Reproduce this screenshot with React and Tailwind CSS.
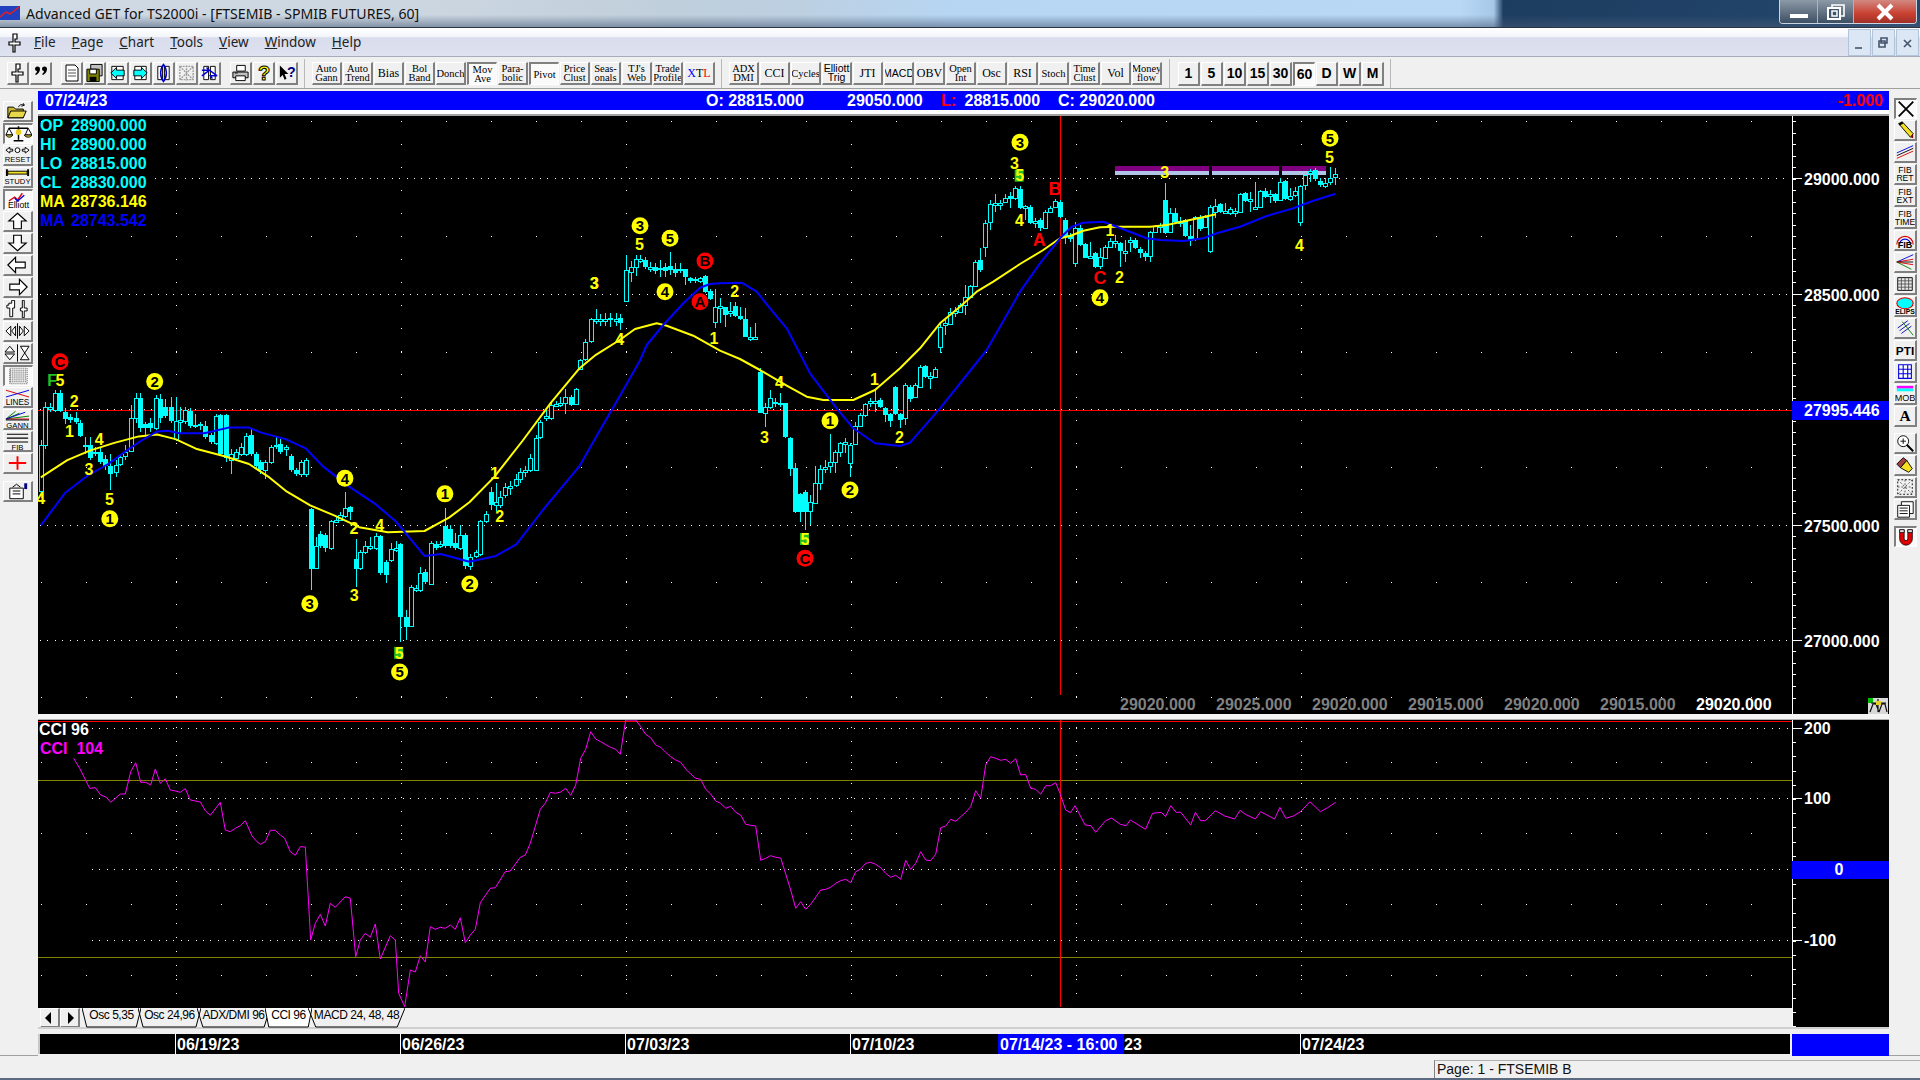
import React from "react";

const A = (x, y) => [x / 2.45, 100 + y / 2.61];
const B = (x, y) => [560 + x / 3, 120 + y / 3];
const C = (x, y) => [1000 + x / 3, 110 + y / 3];
const Z10 = (x, y) => [1000 + x / 1.704, 660 + y / 3];
const Z11 = (x, y) => [38 + x / 3, 720 + y / 3];
const Z12 = (x, y) => [540 + x / 3, 720 + y / 3];

const cA = [
  [100,900,1020,0,1040,0],[110,800,900,0,0,0],[122,800,803,790,815,0],[135,765,810,758,815,0],[148,765,812,758,815,1],[160,815,833,0,0,1],[172,828,835,820,842,1],[185,830,840,815,845,1],[197,842,878,835,880,1],
  [209,900,905,880,925,1],[220,900,935,880,940,1],[232,918,922,905,930,1],[245,918,945,905,950,1],[258,938,955,0,0,1],[270,955,975,925,1018,1],[283,952,972,0,0,0],[295,932,950,925,955,0],[307,920,930,900,940,0],[320,830,915,795,920,0],[332,778,830,0,0,0],[344,778,855,0,0,1],[356,845,855,840,875,1],[368,842,855,0,0,1],[381,778,855,770,860,0],[393,780,830,0,0,1],[405,800,825,780,830,1],[418,800,838,775,842,1],[430,838,885,775,890,0],[442,835,840,800,870,0],[454,810,838,800,845,0],[466,812,852,805,855,1],[478,848,851,820,856,1],[490,846,850,840,860,1],[503,850,880,0,885,1],[516,875,893,870,897,1],[528,825,895,820,900,0],[540,822,925,820,930,1],[553,822,935,820,945,1],[565,925,940,910,975,0],[577,918,935,910,940,0],[590,905,925,895,930,0],[602,878,925,870,930,0],[614,875,925,855,930,1],[626,925,955,920,960,1],[638,945,965,940,975,1],[650,945,965,940,990,0],[663,905,945,900,950,0],[675,900,905,880,912,1],[687,898,918,885,925,1],[700,906,910,900,930,0],[712,930,965,925,970,1],[725,965,975,960,982,1],[737,945,975,940,985,0],[750,940,975,935,985,0],
  [761,1068,1225,1065,1280,1],[773,1165,1222,1140,1225,0],[785,1133,1165,1125,1170,1],[797,1135,1170,1130,1180,1],[810,1100,1170,1095,1175,0],[822,1095,1100,1085,1105,0],[834,1082,1095,1075,1100,0],[846,1065,1085,1022,1092,0],[858,1062,1075,1060,1095,1],
  [871,1197,1225,1145,1270,1],[883,1180,1222,1175,1228,0],[895,1165,1180,1150,1185,0],[907,1165,1170,1140,1175,0],[920,1138,1170,1130,1175,0],[932,1138,1235,1135,1240,1],[945,1205,1240,1200,1260,1],[957,1172,1200,1155,1205,0],[969,1170,1174,1150,1180,0],[981,1160,1350,1155,1415,1],[994,1350,1375,1330,1410,1],[1006,1270,1372,1265,1375,0],[1018,1273,1278,1265,1285,0],[1030,1235,1280,1218,1285,0],[1042,1232,1258,1225,1262,1],[1055,1155,1262,1150,1265,0],[1067,1160,1168,1150,1175,1],[1079,1158,1164,1150,1170,0],[1091,1112,1165,1065,1170,1],[1103,1120,1165,1110,1170,1],[1115,1155,1170,1130,1175,1],[1128,1135,1170,1110,1175,0],[1140,1135,1215,1130,1225,1],[1152,1192,1215,1185,1228,0],[1165,1180,1190,1175,1195,0],[1177,1100,1185,1095,1190,0],[1190,1080,1100,1072,1105,0],
  [1202,1022,1058,1010,1070,1],[1214,1050,1056,1000,1075,0],[1226,1035,1058,1020,1065,0],[1238,1010,1032,1000,1040,0],[1250,1008,1013,995,1030,0],[1263,988,1005,975,1010,0],[1275,970,990,960,1000,0],[1287,965,970,955,985,0],[1299,935,965,925,970,0],[1312,882,965,875,968,0],[1324,840,880,835,885,0],[1337,825,830,810,838,0],[1349,795,830,790,835,0],[1361,793,797,785,800,0],[1373,792,797,775,800,0],[1385,775,790,755,820,0],[1398,775,795,770,798,1],[1410,755,793,752,797,0],
  [1422,678,702,675,705,0],[1434,632,675,625,680,0],[1447,572,630,568,635,0],[1459,572,576,545,585,0],[1471,572,576,558,590,0],[1483,572,576,555,590,0],[1495,568,574,555,592,1],[1508,572,577,555,590,0],[1520,570,582,558,600,1],[1533,445,525,405,528,0],[1545,435,450,420,475,0],[1557,415,435,405,460,0],
];
const cB = [
  [240,416,420,405,430,0],[255,420,442,412,448,1],[270,440,443,425,455,0],[285,440,452,430,462,1],[300,443,450,420,470,1],[315,440,452,430,472,1],[330,437,450,397,465,1],[345,448,458,430,470,1],[360,448,452,430,460,1],[375,448,470,448,495,1],[390,475,483,470,490,1],[405,478,482,470,490,1],[420,475,482,470,488,0],[435,468,515,465,518,1],[450,513,537,508,540,1],
  [465,560,607,508,625,0],[480,558,562,535,610,0],[495,562,584,560,622,1],[510,573,577,545,590,0],[525,558,587,545,590,1],[540,588,597,560,600,1],[555,598,650,565,652,1],[570,650,655,620,662,0],[585,650,655,610,658,0],
  [600,755,878,745,880,1],[615,860,880,850,922,0],[630,835,862,810,868,0],[645,846,850,835,860,1],[660,848,852,818,860,1],[675,850,952,848,955,1],[690,955,1048,952,1068,1],[705,1045,1175,1030,1178,1],[720,1122,1175,1118,1205,1],[735,1115,1175,1110,1230,1],[750,1145,1172,1125,1215,0],[765,1088,1148,1038,1150,0],[780,1048,1090,1035,1110,0],[795,1040,1045,1020,1060,0],[810,1025,1038,942,1060,0],[825,997,1025,990,1060,0],[840,970,995,965,1010,0],[855,965,972,955,1000,0],[870,975,1030,970,1072,0],[885,918,972,905,976,0],[900,885,917,880,920,0],[915,852,885,848,890,0],[930,843,850,835,860,0],[945,842,846,810,875,0],[960,840,862,835,865,1],[975,865,885,862,905,1],[990,882,903,880,920,1],[1005,802,882,798,885,1],[1020,882,900,880,925,1],[1035,795,895,790,915,0],[1050,800,836,795,845,1],[1065,795,832,790,835,0],[1080,740,800,735,805,0],[1095,738,772,735,775,1],[1110,768,772,755,808,0],[1125,747,770,742,775,0],
  [1140,620,680,610,700,0],[1155,610,614,600,645,0],[1170,575,612,565,615,0],[1185,573,577,560,590,0],[1200,555,575,550,580,0],[1215,530,555,495,585,0],[1230,498,530,495,535,0],[1245,425,497,420,500,0],[1260,420,450,385,455,1],[1275,310,380,300,412,0],[1290,253,305,240,330,0],[1305,248,252,222,275,0],[1320,248,252,240,270,0],[1335,233,245,222,250,0],[1350,228,236,215,265,1],[1365,205,235,198,240,0],[1380,207,265,198,268,1],[1395,258,263,255,300,0],[1410,260,308,255,312,1],[1425,303,307,295,325,0],[1440,300,325,295,332,1],[1455,275,325,270,328,0],[1470,265,275,258,280,0],[1485,242,262,238,265,0],[1500,245,292,240,295,1],
];
const cC = [
  [195,330,380,325,402,1],[210,375,388,370,395,1],[225,355,458,335,470,0],[240,353,405,345,408,1],[255,403,443,400,445,1],[270,438,442,395,445,0],[285,430,470,425,473,1],[300,442,467,415,478,0],[315,410,445,405,448,0],[330,392,412,385,415,0],[345,393,397,375,415,0],[360,400,422,395,472,1],[375,423,428,390,455,0],[390,390,395,380,425,0],[405,390,413,385,418,1],[420,418,428,410,445,1],[435,428,442,422,452,1],[450,367,437,362,455,0],[465,348,365,345,368,0],[480,345,349,338,370,0],[495,270,368,220,372,1],[510,308,365,295,368,0],[525,310,335,295,338,1],[540,333,337,322,350,0],[555,330,378,328,382,1],[570,378,392,345,408,1],[585,320,388,318,392,0],[600,320,358,315,362,1],[615,320,350,316,355,0],[630,290,422,285,428,0],[645,287,305,268,325,0],[660,283,305,278,310,1],[675,303,307,280,312,0],[690,298,310,292,315,0],[705,302,306,295,320,0],[720,252,307,248,310,0],[735,250,272,245,275,1],[750,268,272,245,305,0],[765,290,295,215,300,0],[780,244,292,240,295,0],[795,242,260,235,265,1],[810,253,257,240,278,0],[825,253,273,250,278,1],[840,215,270,205,272,0],[855,213,267,210,270,1],[870,258,266,235,272,0],[885,243,255,232,262,0],[900,229,335,225,348,0],[915,196,226,190,240,0],[930,184,188,178,215,0],[945,180,208,175,212,1],[960,213,224,205,230,1],[975,218,228,205,235,0],[990,203,215,172,225,0],[1005,193,200,175,225,0],
];

function allCandles() {
  const out = [];
  const add = (list, map) => list.forEach((c) => {
    const [x, t] = map(c[0], c[1]);
    const [, b] = map(c[0], c[2]);
    const [, h] = map(c[0], c[3] || c[1] - 12);
    const [, l] = map(c[0], c[4] || c[2] + 12);
    out.push({ x: Math.round(x) + 0.5, t: Math.round(t), b: Math.round(b), h: Math.round(h), l: Math.round(l), f: c[5] });
  });
  add(cA, A); add(cB, B); add(cC, C);
  return out;
}

const pts = (list, map) => list.map(([x, y]) => map(x, y));
const toStr = (arr) => arr.map(([x, y]) => `${x.toFixed(1)},${y.toFixed(1)}`).join(" ");

const yellowLine = toStr([
  ...pts([[100,985],[165,940],[220,915],[280,895],[340,878],[385,873],[430,885],[480,910],[550,930],[610,950],[660,985],[700,1020],[760,1058],[820,1085],[880,1115],[950,1128],[1040,1125],[1100,1090],[1150,1050],[1210,985],[1280,890],[1350,790],[1420,700],[1460,665],[1520,625]], A),
  ...pts([[225,627],[290,610],[320,617],[400,647],[480,692],[540,717],[600,750],[680,797],[740,830],[790,840],[880,840],[945,810],[1020,745],[1080,685],[1140,610],[1200,560],[1250,515],[1300,485],[1380,432],[1450,390],[1500,355]], B),
  ...pts([[210,378],[250,362],[300,352],[350,350],[450,350],[500,345],[570,330],[648,313]], C),
]);
const blueLine = toStr([
  ...pts([[100,1110],[160,1025],[215,980],[265,950],[310,915],[345,890],[385,865],[410,863],[440,870],[500,870],[560,855],[610,855],[640,868],[700,885],[750,910],[790,955],[850,1005],[920,1055],[970,1100],[1040,1190],[1080,1185],[1150,1205],[1215,1190],[1265,1160],[1330,1070],[1420,955],[1460,880],[1520,770],[1568,680]], A),
  ...pts([[260,675],[310,615],[370,550],[420,503],[450,492],[480,490],[545,488],[590,515],[630,565],[680,625],[750,760],[830,865],[880,925],[945,970],[1020,978],[1050,968],[1140,865],[1280,690],[1380,515],[1440,430],[1500,355]], B),
  ...pts([[215,350],[250,338],[310,335],[350,350],[440,385],[480,390],[550,393],[610,385],[650,370],[720,350],[800,318],[880,295],[940,272],[1005,252]], C),
]);
const cciLine = toStr([
  ...pts([[107,115],[125,145],[155,205],[172,203],[188,225],[205,232],[218,247],[247,222],[262,222],[278,155],[293,128],[308,187],[323,187],[338,195],[352,147],[367,190],[382,176],[397,210],[412,213],[427,217],[442,206],[457,240],[472,243],[487,246],[502,272],[517,286],[547,247],[562,330],[577,335],[592,325],[607,317],[622,302],[642,348],[657,365],[667,373],[682,365],[697,331],[712,331],[727,345],[740,355],[757,395],[772,406],[787,380],[802,381],[810,520],[818,660],[832,610],[847,583],[862,618],[877,550],[892,562],[922,530],[937,535],[953,710],[967,660],[982,640],[997,652],[1012,612],[1027,717],[1057,647],[1072,660],[1082,820],[1100,860],[1117,750],[1132,756],[1147,707],[1162,726],[1177,620],[1192,628],[1207,622],[1222,625],[1237,615],[1252,628],[1267,593],[1282,668],[1297,645],[1312,628],[1327,548],[1357,505],[1372,503],[1402,455],[1417,453],[1447,412],[1462,405],[1477,370],[1507,268],[1522,250],[1537,217],[1552,220]], Z11),
  ...pts([[62,216],[77,205],[92,226],[107,195],[122,115],[137,88],[152,35],[167,57],[182,65],[197,74],[212,82],[227,88],[241,103],[257,0],[287,0],[302,20],[317,43],[332,53],[347,75],[362,82],[377,97],[392,110],[407,120],[422,127],[437,147],[452,162],[467,175],[482,178],[497,208],[512,222],[527,243],[542,250],[557,265],[572,259],[587,277],[602,285],[617,313],[632,316],[647,318],[662,421],[677,415],[692,407],[707,412],[722,414],[752,510],[767,565],[782,545],[797,568],[812,553],[842,510],[857,508],[872,502],[887,490],[902,482],[917,478],[932,488],[947,455],[962,447],[977,430],[992,427],[1007,433],[1022,443],[1037,460],[1052,472],[1067,466],[1082,478],[1097,421],[1112,448],[1127,430],[1142,395],[1157,420],[1172,422],[1187,403],[1202,323],[1217,318],[1232,298],[1247,304],[1277,277],[1292,260],[1307,212],[1322,235],[1337,135],[1352,110],[1367,115],[1382,121],[1397,118],[1412,130],[1427,116],[1442,165],[1457,163],[1472,205],[1487,208],[1502,223],[1517,197],[1532,197],[1547,188],[1560,220]], Z12),
  ...pts([[112,450],[120,458],[128,437],[145,495],[155,497],[163,517],[180,482],[190,474],[205,493],[215,497],[222,480],[248,508],[260,460],[275,457],[282,470],[291,437],[300,457],[308,457],[325,495],[333,457],[342,482],[350,482],[367,452],[383,468],[400,477],[409,451],[418,463],[435,477],[444,455],[468,477],[477,442],[487,475],[500,468],[512,455],[528,425],[546,455],[558,443],[572,427]], Z10),
]);

const labels = [
  [A,147,683,"C","r"],[A,128,732,"F","g"],[A,147,732,"5","y"],[A,182,787,"2","y"],[A,170,865,"1","y"],[A,243,885,"4","y"],[A,218,965,"3","y"],[A,268,1043,"5","y"],[A,269,1093,"1","c"],[A,379,735,"2","c"],[A,100,1040,"4","y"],[A,845,987,"4","c"],[A,867,1117,"2","y"],[A,930,1110,"4","y"],[A,759,1315,"3","c"],[A,868,1293,"3","y"],[A,978,1443,"5","G"],[A,979,1493,"5","c"],[A,1090,1028,"1","c"],[A,1212,973,"1","y"],[A,1224,1087,"2","y"],[A,1151,1263,"2","c"],[A,1456,478,"3","y"],[A,1518,625,"4","y"],
  [B,240,317,"3","c"],[B,238,372,"5","y"],[B,330,355,"5","c"],[B,315,515,"4","c"],[B,435,423,"B","r"],[B,420,545,"A","r"],[B,524,513,"2","y"],[B,462,655,"1","y"],[B,103,490,"3","y"],[B,658,787,"4","y"],[B,613,951,"3","y"],[B,943,778,"1","y"],[B,810,902,"1","c"],[B,1018,951,"2","y"],[B,870,1110,"2","c"],[B,735,1257,"5","G"],[B,735,1315,"C","r"],[B,1380,67,"3","c"],[B,1363,130,"3","y"],[B,1379,167,"5","G"],[B,1378,300,"4","y"],[B,1438,360,"A","R"],[B,1485,207,"B","R"],
  [C,330,362,"1","y"],[C,300,503,"C","R"],[C,358,502,"2","y"],[C,300,563,"4","c"],[C,494,188,"3","y"],[C,898,405,"4","y"],[C,990,85,"5","c"],[C,988,142,"5","y"],
];

function Label({ map, px, py, t, kind }) {
  const [x, y] = map(px, py);
  const fill = { y: "#ffff00", G: "#ffff00", g: "#22c022", R: "#ff0000", c: "#000000", r: "#000000" }[kind];
  const round = kind === "c" || kind === "r";
  const size = kind === "R" ? 18 : round ? 15 : 16;
  return (
    <g>
      {kind === "c" && <circle cx={x} cy={y} r="8.5" fill="#ffff00" />}
      {kind === "r" && <circle cx={x} cy={y} r="8.5" fill="#ff0000" />}
      {kind === "G" && <rect x={x - 5} y={y - 6} width="9" height="12" fill="#22c022" />}
      <text x={x} y={y + size * 0.36} textAnchor="middle" fontSize={size} fontWeight="700" fill={fill}>{t}</text>
    </g>
  );
}

const range = (from, to, step) => {
  const a = [];
  for (let v = from; v <= to; v += step) a.push(v);
  return a;
};
const Dots = ({ items }) => (
  <path d={items.map(([x, y]) => `M${Math.round(x)} ${Math.round(y)}h1v1h-1z`).join("")} fill="#ffffff" />
);

const vLines = [175.5, 400.5, 625.5, 850.5, 1075.5, 1300.5];

function TopChart() {
  const candles = allCandles();
  const dots = [];
  [[178, 155], [294, 40], [409, 40], [525, 40], [640, 40]].forEach(([y, s]) => range(s, 1790, 7.4).forEach((x) => dots.push([x, y])));
  [121, 236, 352, 467, 582, 697].forEach((y) => range(40.5, 1790, 45).forEach((x) => dots.push([x, y])));
  vLines.forEach((x) => range(121, 710, 23).forEach((y) => dots.push([x, y])));
  return (
    <svg viewBox="38 116 1754 598" className="block w-[1754px] h-[598px]" fontFamily="'Liberation Sans', sans-serif">
      <Dots items={dots} />
      <line x1="38" x2="1792" y1="410.5" y2="410.5" stroke="#ff0000" strokeWidth="1" />
      <line x1="1060.5" x2="1060.5" y1="116" y2="695" stroke="#ff0000" strokeWidth="1" />
      <g shapeRendering="crispEdges">
        <rect x="1115" y="166" width="94" height="5" fill="#800080" />
        <rect x="1115" y="171" width="94" height="4" fill="#b0c4e8" />
        <rect x="1212" y="166" width="67" height="5" fill="#800080" />
        <rect x="1212" y="171" width="67" height="4" fill="#b0c4e8" />
        <rect x="1282" y="166" width="44" height="5" fill="#800080" />
        <rect x="1282" y="171" width="44" height="4" fill="#b0c4e8" />
        {candles.map((c, i) => (
          <g key={i}>
            <line x1={c.x} x2={c.x} y1={c.h} y2={c.t} stroke="#00ffff" />
            <line x1={c.x} x2={c.x} y1={c.b} y2={c.l} stroke="#00ffff" />
            {c.f ? (
              <rect x={c.x - 2.5} y={c.t} width="5" height={Math.max(2, c.b - c.t)} fill="#00ffff" />
            ) : (
              <rect x={c.x - 2} y={c.t + 0.5} width="4" height={Math.max(2, c.b - c.t)} fill="#000000" stroke="#00ffff" />
            )}
          </g>
        ))}
      </g>
      <polyline points={yellowLine} fill="none" stroke="#ffff00" strokeWidth="2" strokeLinejoin="round" />
      <polyline points={blueLine} fill="none" stroke="#0000ff" strokeWidth="2" strokeLinejoin="round" />
      {labels.map(([map, px, py, t, kind], i) => <Label key={i} map={map} px={px} py={py} t={t} kind={kind} />)}
      <g fontSize="16" fontWeight="700">
        {[["OP","28900.000","#00ffff",131],["HI","28900.000","#00ffff",150],["LO","28815.000","#00ffff",169],["CL","28830.000","#00ffff",188],["MA","28736.146","#ffff00",207],["MA","28743.542","#0000ff",226]].map(([a, b, c, y], i) => (
          <g key={i} fill={c}>
            <text x="40" y={y}>{a}</text>
            <text x="71" y={y}>{b}</text>
          </g>
        ))}
        {["29020.000","29025.000","29020.000","29015.000","29020.000","29015.000"].map((t, i) => (
          <text key={i} x={1120 + i * 96} y="710" fill="#808080">{t}</text>
        ))}
        <text x="1696" y="710" fill="#ffffff">29020.000</text>
      </g>
    </svg>
  );
}

function TopAxis() {
  const major = { 178: "29000.000", 294: "28500.000", 525: "27500.000", 640: "27000.000" };
  return (
    <svg viewBox="1792 116 97 598" className="block w-[97px] h-[598px]" fontFamily="'Liberation Sans', sans-serif">
      <rect x="1792" y="116" width="1" height="598" fill="#ffffff" />
      <g shapeRendering="crispEdges">
        {range(0, 50, 1).map((k) => {
          const y = 121 + k * 11.53;
          return <rect key={k} x="1793" y={y} width="3" height="1" fill="#ffffff" />;
        })}
      </g>
      {Object.entries(major).map(([y, t]) => (
        <g key={y}>
          <rect x="1793" y={y} width="9" height="1" fill="#ffffff" />
          <text x="1804" y={+y + 7} fontSize="16" fontWeight="700" fill="#ffffff">{t}</text>
        </g>
      ))}
      <rect x="1792" y="401" width="97" height="19" fill="#0000ff" />
      <text x="1804" y="416" fontSize="16" fontWeight="700" fill="#ffffff">27995.446</text>
      <rect x="1868" y="698" width="20" height="16" fill="#d8d8d8" />
      <rect x="1868" y="698" width="5" height="5" fill="#00c000" />
      <path d="M1870 712l3-8h3l3 8M1879 712l3-8h3l2 8M1871 703h15M1878 699v13" fill="none" stroke="#101010" strokeWidth="1.2" />
      <rect x="1876" y="701" width="5" height="4" fill="#e8d020" />
    </svg>
  );
}

function LowChart() {
  const dots = [];
  [728, 798, 869, 940].forEach((y) => range(92, 1790, 7.4).forEach((x) => dots.push([x, y])));
  [762, 833, 904, 975].forEach((y) => range(40.5, 1790, 45).forEach((x) => dots.push([x, y])));
  vLines.forEach((x) => range(727, 1005, 14).forEach((y) => dots.push([x, y])));
  return (
    <svg viewBox="38 720 1754 288" className="block w-[1754px] h-[288px]" fontFamily="'Liberation Sans', sans-serif">
      <Dots items={dots} />
      <line x1="38" x2="1792" y1="721.5" y2="721.5" stroke="#ff0000" />
      <line x1="38" x2="1792" y1="780.5" y2="780.5" stroke="#808000" />
      <line x1="38" x2="1792" y1="957.5" y2="957.5" stroke="#808000" />
      <line x1="1060.5" x2="1060.5" y1="720" y2="1007" stroke="#ff0000" />
      <polyline points={cciLine} fill="none" stroke="#ff00ff" strokeWidth="1" />
      <text x="39" y="735" fontSize="16" fontWeight="700" fill="#ffffff">CCI 96</text>
      <text x="40" y="754" fontSize="16" fontWeight="700" fill="#ff00ff" xmlSpace="preserve">CCI  104</text>
    </svg>
  );
}

function LowAxis() {
  const major = [[728, "200"], [798, "100"], [940, "-100"]];
  return (
    <svg viewBox="1792 720 97 307" className="block w-[97px] h-[307px]" fontFamily="'Liberation Sans', sans-serif">
      <rect x="1792" y="720" width="1" height="307" fill="#ffffff" />
      <g shapeRendering="crispEdges">
        {range(0, 21, 1).map((k) => <rect key={k} x="1793" y={728 + k * 14.2} width="3" height="1" fill="#ffffff" />)}
      </g>
      {major.map(([y, t]) => (
        <g key={t}>
          <rect x="1793" y={y} width="9" height="1" fill="#ffffff" />
          <text x="1804" y={y + 6} fontSize="16" fontWeight="700" fill="#ffffff">{t}</text>
        </g>
      ))}
      <rect x="1792" y="861" width="97" height="18" fill="#0000ff" />
      <text x="1839" y="875" fontSize="16" fontWeight="700" fill="#ffffff" textAnchor="middle">0</text>
    </svg>
  );
}

function DateAxis() {
  const ticks = [[175, "06/19/23"], [400, "06/26/23"], [625, "07/03/23"], [850, "07/10/23"], [1300, "07/24/23"]];
  return (
    <svg viewBox="38 1034 1752 20" className="block w-[1752px] h-[20px]" fontFamily="'Liberation Sans', sans-serif">
      <rect x="38" y="1034" width="2" height="20" fill="#c8c8c8" />
      {ticks.map(([x, t]) => (
        <g key={t}>
          <rect x={x} y="1034" width="1" height="20" fill="#ffffff" />
          <text x={x + 2} y="1050" fontSize="16" fontWeight="700" fill="#ffffff">{t}</text>
        </g>
      ))}
      <rect x="998" y="1034" width="126" height="20" fill="#0000ff" />
      <text x="1000" y="1050" fontSize="16" fontWeight="700" fill="#ffffff">07/14/23 - 16:00</text>
      <text x="1124" y="1050" fontSize="16" fontWeight="700" fill="#ffffff">23</text>
    </svg>
  );
}

/* ---------- small icons ---------- */
const S = ({ children, w = 24, h = 18 }) => (
  <svg viewBox={`0 0 ${w} ${h}`} width={w} height={h} fontFamily="'Liberation Sans', sans-serif">{children}</svg>
);
const Pin = () => (
  <S w={18} h={20}><path d="M7 1h4v5h-2v3h5v3H9v7H7v-7H3V9h4z" fill="#fff" stroke="#000" strokeWidth="1.2" /></S>
);
const Quote = () => (
  <S w={18} h={20}><path d="M3 6a2.500 2.500 0 1 1 5 0c0 3-2 5-4 6l-1-1c1-.7 2-1.700 2-3a2 2 0 0 1-2-2zM10 6a2.500 2.500 0 1 1 5 0c0 3-2 5-4 6l-1-1c1-.7 2-1.700 2-3a2 2 0 0 1-2-2z" fill="#000" /></S>
);
const Doc = () => (
  <S w={18} h={20}><path d="M3 2h9l3 3v13H3z" fill="#fff" stroke="#000" /><path d="M5 7h8M5 10h8M5 13h8" stroke="#555" /></S>
);
const Floppy = () => (
  <S w={20} h={20}><path d="M6 1h12v12H6z" fill="#c0c0c0" stroke="#000" /><path d="M2 6h13v13H2z" fill="#808000" stroke="#000" /><path d="M5 6h7v5H5z" fill="#fff" stroke="#000" /><path d="M5 14h7v5H5z" fill="#000" /></S>
);
const ArrowDoc = ({ right }) => (
  <S w={20} h={20}><path d="M4 3h12v14H4z" fill="#fff" stroke="#000" /><path d={right ? "M3 7h8V4l6 6-6 6v-3H3z" : "M17 7H9V4l-6 6 6 6v-3h8z"} fill="#00ffff" stroke="#000" /></S>
);
const Book = ({ disabled, blue }) => (
  <S w={20} h={20}>
    {disabled ? (
      <g stroke="#9a9a9a" strokeWidth="1.4" fill="none"><path d="M3 3h14v14H3zM3 3l14 14M17 3L3 17M10 2v16" strokeDasharray="2 1" /></g>
    ) : blue ? (
      <g><path d="M4 3h5v14H4zM11 3h5v14h-5z" fill="#fff" stroke="#000" /><path d="M2 7h7l-2-3M18 13h-7l2 3M2 13l8-6 8 6" fill="none" stroke="#0000d0" strokeWidth="1.6" /></g>
    ) : (
      <g><path d="M4 3h5v14H4zM11 3h5v14h-5z" fill="#fff" stroke="#000" /><path d="M10 1c-4 5-4 13 0 18 4-5 4-13 0-18z" fill="none" stroke="#0000d0" strokeWidth="1.6" /></g>
    )}
  </S>
);
const Printer = () => (
  <S w={20} h={20}><path d="M6 2h9v6H6z" fill="#fff" stroke="#000" /><path d="M2 9h16v6H2z" fill="#c0c0c0" stroke="#000" /><path d="M5 13h10v5H5z" fill="#fff" stroke="#000" /><path d="M4 10h3" stroke="#000" /></S>
);
const Help = () => (
  <S w={18} h={20}><text x="9" y="17" textAnchor="middle" fontSize="20" fontWeight="700" fill="#ffff00" stroke="#000" strokeWidth="1">?</text></S>
);
const HelpArrow = () => (
  <S w={20} h={20}><path d="M3 2v13l3-3 2 5 2-1-2-5h4z" fill="#000" /><text x="15" y="14" textAnchor="middle" fontSize="15" fontWeight="700" fill="#000080">?</text></S>
);

const Cap = ({ t, y = 18, s = 8 }) => (
  <text x="14" y={y} textAnchor="middle" fontSize={s} fill="#000">{t}</text>
);
const Arrow = ({ d }) => <S w={28} h={20}><path d={d} fill="#fff" stroke="#000" strokeWidth="1.2" /></S>;

const leftIcons = [
  <S w={28} h={20}><path d="M4 6h6l2 2h8v9H4z" fill="#c8b830" stroke="#000" /><path d="M4 17l3-7h16l-3 7z" fill="#e6d84a" stroke="#000" /><path d="M15 6c1-3 4-3 6-2l-1-2m1 2l-3 1" fill="none" stroke="#000" /></S>,
  <S w={28} h={20}><path d="M14 2v14M4 4h20M9 17h10" stroke="#000" strokeWidth="1.5" /><path d="M4 4l-3 7h7zM24 4l-3 7h7z" fill="none" stroke="#000" /><path d="M1 11c1 3 6 3 7 0zM20 11c1 3 7 3 8 0z" fill="#f0e020" stroke="#000" /><circle cx="14" cy="8" r="3" fill="#e8d020" /></S>,
  <S w={28} h={20}><path d="M2 5l4-3v2h3v2H6v2zM26 5l-4-3v2h-3v2h3v2z" fill="#fff" stroke="#000" /><circle cx="14" cy="5" r="2.5" fill="#fff" stroke="#000" /><Cap t="RESET" y={17} /></S>,
  <S w={28} h={20}><path d="M4 4h20v3H4z" fill="#f0e020" stroke="#000" /><path d="M3 2v7M25 2v7" stroke="#000" strokeWidth="2" /><Cap t="STUDY" y={17} /></S>,
  <S w={28} h={20}><path d="M4 11l6-4 3 3 5-7" fill="none" stroke="#e00000" strokeWidth="1.4" /><path d="M10 8l3 3 7-6" fill="none" stroke="#0000e0" strokeWidth="1.4" /><Cap t="Elliott" y={18} s={9} /></S>,
  <Arrow d="M14 2l9 8h-5v8h-8v-8H5z" />,
  <Arrow d="M14 18l9-8h-5V2h-8v8H5z" />,
  <Arrow d="M4 10l8-8v5h10v6H12v5z" />,
  <Arrow d="M24 10l-8-8v5H6v6h10v5z" />,
  <S w={28} h={20}><path d="M5 4h3V1h3v8h-2v9H6V9H3V6h2zM19 1h2v8h3v3h-3v7h-2v-7h-2V9h2z" fill="#fff" stroke="#000" /></S>,
  <S w={28} h={20}><path d="M14 2v16" stroke="#000" /><path d="M2 10l5-5v10zM12 5l-4 5 4 5zM16 5l4 5-4 5zM26 10l-5-5v10z" fill="#fff" stroke="#000" /></S>,
  <S w={28} h={20}><path d="M14 1v18" stroke="#000" /><path d="M6 3l5 6H1zM6 17l5-6H1zM17 3h9l-4.500 7zM17 17h9l-4.500-7z" fill="#fff" stroke="#000" /></S>,
  <S w={28} h={20}><path d="M5 2h18v16H5z" fill="#fff" stroke="#555" strokeDasharray="1 1" /><path d="M5 4h18M5 6h18M5 8h18M5 10h18M5 12h18M5 14h18M5 16h18" stroke="#333" strokeDasharray="1 1" /></S>,
  <S w={28} h={20}><path d="M2 3l24 7" stroke="#e00000" /><path d="M2 10l24-7" stroke="#0000e0" /><Cap t="LINES" y={18} s={8.500} /></S>,
  <S w={28} h={20}><path d="M2 10L12 2M2 10l14-6M2 10l24-3" stroke="#008000" /><path d="M2 10l24 0" stroke="#e00000" /><path d="M2 10L22 3" stroke="#0000e0" /><path d="M2 11h24" stroke="#000" /><Cap t="GANN" y={19} s={8} /></S>,
  <S w={28} h={20}><path d="M3 3h22M3 7h22M3 11h22" stroke="#000" strokeWidth="1.2" /><Cap t="FIB" y={19} s={8} /></S>,
  <S w={28} h={20}><path d="M14 3v14M5 10h18" stroke="#ff0000" strokeWidth="2" /></S>,
];
const ReportIcon = () => (
  <S w={28} h={20}><path d="M6 7h14v11H6z" fill="#fff" stroke="#000" /><path d="M9 10h8M9 13h8" stroke="#000" /><path d="M9 6l4-3 4 3" fill="none" stroke="#000" /><path d="M21 2h3v6h-3z" fill="#000080" /></S>
);

const NT = ({ a, b }) => (
  <S w={22} h={20}>
    <text x="11" y="9" textAnchor="middle" fontSize="9.500">{a}</text>
    <text x="11" y="18" textAnchor="middle" fontSize="9.500">{b}</text>
  </S>
);
const rightIcons = [
  <S w={22} h={20}><path d="M3 2l16 16M19 2L3 18" stroke="#000" strokeWidth="2" /></S>,
  <S w={22} h={20}><path d="M4 3l4-2 12 13-3 4z" fill="#f4e020" stroke="#000" /><path d="M4 3l4-2 1 2-4 2z" fill="#000" /><path d="M17 18l3-4 0 5z" fill="#800000" /></S>,
  <S w={22} h={20}><path d="M2 11L20 3" stroke="#0000e0" /><path d="M2 14L20 6" stroke="#000" /><path d="M2 17L20 9" stroke="#e00000" /></S>,
  <NT a="FIB" b="RET" />,
  <NT a="FIB" b="EXT" />,
  <NT a="FIB" b="TIME" />,
  <S w={22} h={20}><path d="M2 15a9 9 0 0 1 18 0" fill="none" stroke="#e00000" strokeWidth="1.3" /><path d="M5 15a6 6 0 0 1 12 0" fill="none" stroke="#0000e0" strokeWidth="1.3" /><text x="11" y="19" textAnchor="middle" fontSize="10" fontWeight="700">FIB</text></S>,
  <S w={22} h={20}><path d="M2 10L20 2" stroke="#0000e0" /><path d="M2 10L20 7" stroke="#e00000" /><path d="M2 10h18" stroke="#000" /><path d="M2 10L20 13" stroke="#e00000" /><path d="M2 10l16 8" stroke="#008000" /></S>,
  <S w={22} h={20}><path d="M3 3h16v14H3z" fill="#e8e8e8" stroke="#000" /><path d="M7 3v14M11 3v14M15 3v14M3 6.500h16M3 10h16M3 13.500h16" stroke="#555" /></S>,
  <S w={22} h={20}><ellipse cx="11" cy="7" rx="9" ry="6" fill="#00ffff" stroke="#e00000" strokeWidth="1.2" /><text x="11" y="19" textAnchor="middle" fontSize="7.500" fontWeight="700">ELIPS</text></S>,
  <S w={22} h={20}><path d="M3 10L14 2M5 13L16 5M7 16L18 8" stroke="#0000a0" /><path d="M8 3l12 15" stroke="#008000" /></S>,
  <S w={22} h={20}><text x="11" y="15" textAnchor="middle" fontSize="13" fontWeight="700">PTI</text></S>,
  <S w={22} h={20}><path d="M4 2h14v15H4zM4 7h14M4 12h14M9 2v15M14 2v15" fill="#fff" stroke="#0000e0" strokeWidth="1.2" /></S>,
  <S w={22} h={20}><path d="M2 1h18v3H2z" fill="#ff00ff" /><path d="M2 4h18v3H2z" fill="#00ffff" /><text x="11" y="18" textAnchor="middle" fontSize="10">MOB</text></S>,
  <S w={22} h={20}><text x="11" y="16" textAnchor="middle" fontSize="17" fontWeight="700" fontFamily="'Liberation Serif', serif">A</text></S>,
];
const rightIcons2 = [
  <S w={22} h={20}><circle cx="9" cy="8" r="6" fill="#fff" stroke="#000" /><path d="M6 8h6M9 5v6" stroke="#000" /><path d="M13 12l7 7" stroke="#000" strokeWidth="2.200" /></S>,
  <S w={22} h={20}><path d="M9 2l4 3-7 8-4-4z" fill="#a04040" stroke="#000" /><path d="M13 5l6 9-4 4-9-5z" fill="#f4e020" stroke="#000" /></S>,
  <S w={22} h={20}><path d="M3 2h16v16H3z" fill="none" stroke="#000" strokeDasharray="2 2" /><path d="M3 2l16 16M19 2L3 18M11 2v16M3 10h16" stroke="#555" strokeDasharray="2 2" /></S>,
  <S w={22} h={20}><path d="M7 2h13v13H7z" fill="#fff" stroke="#000" /><path d="M3 6h13v13H3z" fill="#fff" stroke="#000" /><path d="M5 9h9M5 12h9M5 15h9" stroke="#000" /></S>,
];
const Magnet = () => (
  <S w={22} h={20}><path d="M4 2h5v10a2 2 0 0 0 4 0V2h5v10a7 7 0 0 1-14 0z" fill="#e00000" stroke="#000" strokeWidth="0.800" /><path d="M4 2h5v3H4zM13 2h5v3h-5z" fill="#e8e8e8" stroke="#000" strokeWidth="0.800" /></S>
);

/* ---------- buttons ---------- */
const raised = "bg-[#f0f0f0] border-t border-l border-t-white border-l-white border-b-2 border-r-2 border-b-[#808080] border-r-[#808080]";
const pressed = "bg-[#fafafa] border-t-2 border-l-2 border-t-[#808080] border-l-[#808080] border-b border-r border-b-white border-r-white";

const IconBtn = ({ children, on }) => (
  <div className={`flex items-center justify-center w-[22px] h-[23px] overflow-hidden ${on ? pressed : raised}`}>{children}</div>
);

const Study = ({ lines, on, big, sans }) => (
  <div className={`flex flex-col items-center justify-center w-[30px] h-[23px] overflow-hidden text-black whitespace-nowrap ${on ? pressed : raised} ${sans ? "font-['Liberation_Sans',sans-serif]" : "font-['Liberation_Serif',serif]"} ${big ? "text-[12px] leading-[12px]" : "text-[10.5px] leading-[9px]"}`}>
    {lines.map((l) => <span key={l}>{l}</span>)}
  </div>
);

const studyA = [
  [["Auto", "Gann"]], [["Auto", "Trend"]], [["Bias"], 0, 1], [["Bol", "Band"]], [["Donch"]], [["Mov", "Ave"], 1], [["Para-", "bolic"]], [["Pivot"], 1], [["Price", "Clust"]], [["Seas-", "onals"]], [["TJ's", "Web"]], [["Trade", "Profile"]],
];
const studyB = [
  [["ADX", "DMI"]], [["CCI"], 0, 1], [["Cycles"]], [["Elliott", "Trig"], 0, 0, 1], [["JTI"], 0, 1], [["MACD"], 0, 0, 1], [["OBV"], 0, 1], [["Open", "Int"]], [["Osc"], 0, 1], [["RSI"], 0, 1], [["Stoch"]], [["Time", "Clust"]], [["Vol"], 0, 1], [["Money", "flow"]],
];
const Sep = () => <div className="w-px h-[29px] bg-[#b8b8b8]" />;

function Toolbar() {
  return (
    <div className="flex items-center h-[31px] pt-[2px] pl-[7px] bg-[#f0f0f0]">
      <div className="flex gap-px"><IconBtn><Pin /></IconBtn><IconBtn><Quote /></IconBtn></div>
      <div className="flex gap-px ml-[9px]">
        <IconBtn><Doc /></IconBtn><IconBtn><Floppy /></IconBtn><IconBtn><ArrowDoc /></IconBtn><IconBtn><ArrowDoc right /></IconBtn><IconBtn><Book /></IconBtn><IconBtn><Book disabled /></IconBtn><IconBtn><Book blue /></IconBtn>
      </div>
      <div className="flex gap-px ml-[9px]"><IconBtn><Printer /></IconBtn><IconBtn><Help /></IconBtn><IconBtn><HelpArrow /></IconBtn></div>
      <div className="ml-[6px] mr-[7px]"><Sep /></div>
      <div className="flex gap-px">
        {studyA.map(([l, on, big, sans], i) => <Study key={i} lines={l} on={on} big={big} sans={sans} />)}
        <div className={`flex items-center justify-center w-[31px] h-[23px] text-[12px] font-['Liberation_Serif',serif] ${raised}`}>
          <span className="text-[#0000ff]">X</span><span className="text-black">T</span><span className="text-[#ff0000]">L</span>
        </div>
      </div>
      <div className="ml-[6px] mr-[7px]"><Sep /></div>
      <div className="flex gap-px">
        {studyB.map(([l, on, big, sans], i) => <Study key={i} lines={l} on={on} big={big} sans={sans} />)}
      </div>
      <div className="ml-[7px] mr-[8px]"><Sep /></div>
      <div className="flex gap-px">
        {["1", "5", "10", "15", "30", "60", "D", "W", "M"].map((t) => (
          <div key={t} className={`flex items-center justify-center w-[22px] h-[24px] text-[14px] font-bold text-black ${t === "60" ? pressed : raised}`}>{t}</div>
        ))}
      </div>
      <div className="ml-[6px]"><Sep /></div>
    </div>
  );
}

const menus = ["File", "Page", "Chart", "Tools", "View", "Window", "Help"];

function Tab({ w, text, active, ml }) {
  return (
    <div className={`relative flex justify-center pt-[1px] h-[20px] ${w} ${ml}`}>
      <svg viewBox="0 0 100 20" preserveAspectRatio="none" className="absolute inset-0 w-full h-full">
        <path d="M0 0L8 19H92L100 0" fill={active ? "#ffffff" : "none"} stroke="#000" strokeWidth="1" vectorEffect="non-scaling-stroke" />
      </svg>
      <span className="relative text-[12px] leading-[13px] text-black tracking-[-0.45px] whitespace-nowrap">{text}</span>
    </div>
  );
}

export default function App() {
  return (
    <div className="flex flex-col w-[1920px] h-[1080px] overflow-hidden bg-[#f0f0f0] font-['Liberation_Sans',sans-serif]">
      {/* title bar */}
      <div className="flex items-center justify-between h-[28px] border-b border-b-[#2a3442] bg-[linear-gradient(180deg,rgba(0,0,0,0)_55%,rgba(70,90,120,0.55)_100%),linear-gradient(90deg,#d0dae4_0%,#ccd6e0_22%,#c0cfdc_35%,#bcd0e2_42%,#b6d6f3_50%,#b8d8f5_76%,#a8c8e8_77.800%,#1d3d60_78.300%,#23476c_100%)]">
        <div className="flex items-center gap-[6px]">
          <svg viewBox="0 0 20 14" width="20" height="14">
            <path d="M0 0h20v14H0z" fill="#2040c0" />
            <path d="M0 11l6-5 4 2 9-7" fill="none" stroke="#e02020" strokeWidth="1.5" />
          </svg>
          <span className="font-['Noto_Sans',sans-serif] text-[14.100px] text-[#111] whitespace-nowrap">Advanced GET for TS2000i - [FTSEMIB - SPMIB FUTURES, 60]</span>
        </div>
        <div className="flex h-[24px] self-start mr-[3px] rounded-b-[4px] overflow-hidden border border-t-0 border-[#c8d4e0]">
          <div className="flex items-end justify-center w-[38px] pb-[5px] bg-[linear-gradient(180deg,#8c99a6,#3e5064)] border-r border-r-[#a8b4c0]">
            <div className="w-[18px] h-[4px] bg-white" />
          </div>
          <div className="flex items-center justify-center w-[36px] bg-[linear-gradient(180deg,#8c99a6,#3e5064)] border-r border-r-[#a8b4c0]">
            <svg viewBox="0 0 20 18" width="20" height="18"><path d="M6 2h12v11H6z" fill="none" stroke="#fff" strokeWidth="1.6" /><path d="M2 5h12v11H2z" fill="#40566c" stroke="#fff" strokeWidth="2" /><path d="M6 8h5v5H6z" fill="none" stroke="#fff" strokeWidth="1.500" /></svg>
          </div>
          <div className="flex items-center justify-center w-[62px] bg-[linear-gradient(180deg,#d28880,#c84030_60%,#a03028)]">
            <svg viewBox="0 0 20 18" width="20" height="18"><path d="M3 2l14 14M17 2L3 16" stroke="#fff" strokeWidth="4" /></svg>
          </div>
        </div>
      </div>

      {/* menu bar */}
      <div className="flex items-center h-[29px] pt-[1px] bg-[linear-gradient(180deg,#ffffff_0%,#f4f6fa_30%,#d8dcec_35%,#dfe3f0_100%)] border-b border-b-[#a8acb8]">
        <div className="pl-[6px] w-[34px]"><Pin /></div>
        <div className="flex gap-[16px] font-['Noto_Sans',sans-serif] text-[13.500px] text-[#222]">
          {menus.map((m) => (
            <span key={m}><span className="underline">{m[0]}</span>{m.slice(1)}</span>
          ))}
        </div>
        <div className="flex gap-px ml-auto mr-px">
          {["M5 15h7", "M7 5h6v5H7zM5 8h6v6H5z", "M6 7l7 7M13 7l-7 7"].map((d) => (
            <div key={d} className="flex items-center justify-center w-[23px] h-[27px] bg-[#dbe7f5] border border-[#b4c4d8]">
              <svg viewBox="0 0 20 20" width="20" height="20"><path d={d} fill="none" stroke="#44546a" strokeWidth="1.600" /></svg>
            </div>
          ))}
        </div>
      </div>

      <Toolbar />

      {/* main */}
      <div className="flex h-[968px] border-t border-t-[#a0a0a0]">
        {/* left tool column */}
        <div className="flex flex-col w-[38px] pl-[3px] pt-[12px] border-b border-b-[#a0a0a0]">
          <div className="flex flex-col gap-px">
            {leftIcons.map((ic, i) => (
              <div key={i} className={`flex items-center justify-center w-[30px] h-[21px] overflow-hidden ${[1, 4, 12].includes(i) ? pressed : raised}`}>{ic}</div>
            ))}
          </div>
          <div className={`flex items-center justify-center w-[30px] h-[21px] mt-[7px] ${raised}`}><ReportIcon /></div>
        </div>

        {/* centre */}
        <div className="flex flex-col w-[1851px] pt-[2px]">
          <div className="flex items-center h-[19px] bg-[#0000ff] text-[16px] font-bold text-white whitespace-pre">
            <span className="ml-[7px] w-[661px]">07/24/23</span>
            <span className="w-[141px]">O: 28815.000</span>
            <span className="w-[94px]">29050.000</span>
            <span className="w-[23.500px] text-[#ff0000]">L:</span>
            <span className="w-[93.500px]">28815.000</span>
            <span>C: 29020.000</span>
            <span className="ml-auto mr-[6px] text-[#ff0000]">-1.000</span>
          </div>
          <div className="h-[4px] bg-white" />
          <div className="h-[2px] bg-[#a0a0a0]" />
          <div className="flex h-[598px] bg-black">
            <TopChart />
            <TopAxis />
          </div>
          <div className="h-[6px] bg-[#f4f4f4] border-b border-b-[#b0b0b0]" />
          <div className="flex h-[307px]">
            <div className="flex flex-col w-[1754px]">
              <div className="h-[288px] bg-black"><LowChart /></div>
              <div className="flex h-[19px] pl-[2px] bg-[#f0f0f0]">
                <div className={`flex items-center justify-center w-[20px] h-[20px] pr-[4px] ${raised}`}>
                  <svg viewBox="0 0 8 12" width="8" height="12"><path d="M7 0v12L1 6z" /></svg>
                </div>
                <div className={`flex items-center justify-center w-[20px] h-[20px] pl-[3px] ${raised}`}>
                  <svg viewBox="0 0 8 12" width="8" height="12"><path d="M1 0v12l6-6z" /></svg>
                </div>
                <Tab w="w-[59px]" ml="ml-[2px]" text="Osc 5,35" />
                <Tab w="w-[63px]" ml="-ml-[3px]" text="Osc 24,96" />
                <Tab w="w-[73px]" ml="-ml-[4px]" text="ADX/DMI 96" />
                <Tab w="w-[47px]" ml="-ml-[5px]" text="CCI 96" active />
                <Tab w="w-[97px]" ml="-ml-[4px]" text="MACD 24, 48, 48" />
              </div>
            </div>
            <div className="bg-black"><LowAxis /></div>
          </div>
          <div className="h-[7px] bg-[#f0f0f0] border-t-[2px] border-t-[#d0d0d0]" />
          <div className="flex h-[22px]">
            <div className="h-[20px] w-[1752px] bg-black"><DateAxis /></div>
            <div className="ml-[2px] w-[97px] h-[22px] bg-[#0000ff]" />
          </div>
        </div>

        {/* right tool column */}
        <div className="flex flex-col w-[31px] pl-[5px] pt-[9px] border-b border-b-[#a0a0a0]">
          <div className="flex flex-col gap-px">
            {rightIcons.map((ic, i) => (
              <div key={i} className={`flex items-center justify-center w-[23px] h-[21px] overflow-hidden ${i === 0 ? pressed : raised}`}>{ic}</div>
            ))}
          </div>
          <div className="flex flex-col gap-px mt-[6px]">
            {rightIcons2.map((ic, i) => (
              <div key={i} className={`flex items-center justify-center w-[23px] h-[21px] overflow-hidden ${raised}`}>{ic}</div>
            ))}
          </div>
          <div className={`flex items-center justify-center w-[23px] h-[21px] mt-[6px] overflow-hidden ${pressed}`}><Magnet /></div>
        </div>
      </div>

      {/* status bar */}
      <div className="flex justify-end h-[24px] pt-[4px] border-b-2 border-b-[#5a6a80]">
        <div className="flex items-center w-[486px] pl-[2px] border-t border-l border-t-[#b0b0b0] border-l-[#808080] text-[14px] text-[#111]">Page: 1 - FTSEMIB B</div>
      </div>
    </div>
  );
}
